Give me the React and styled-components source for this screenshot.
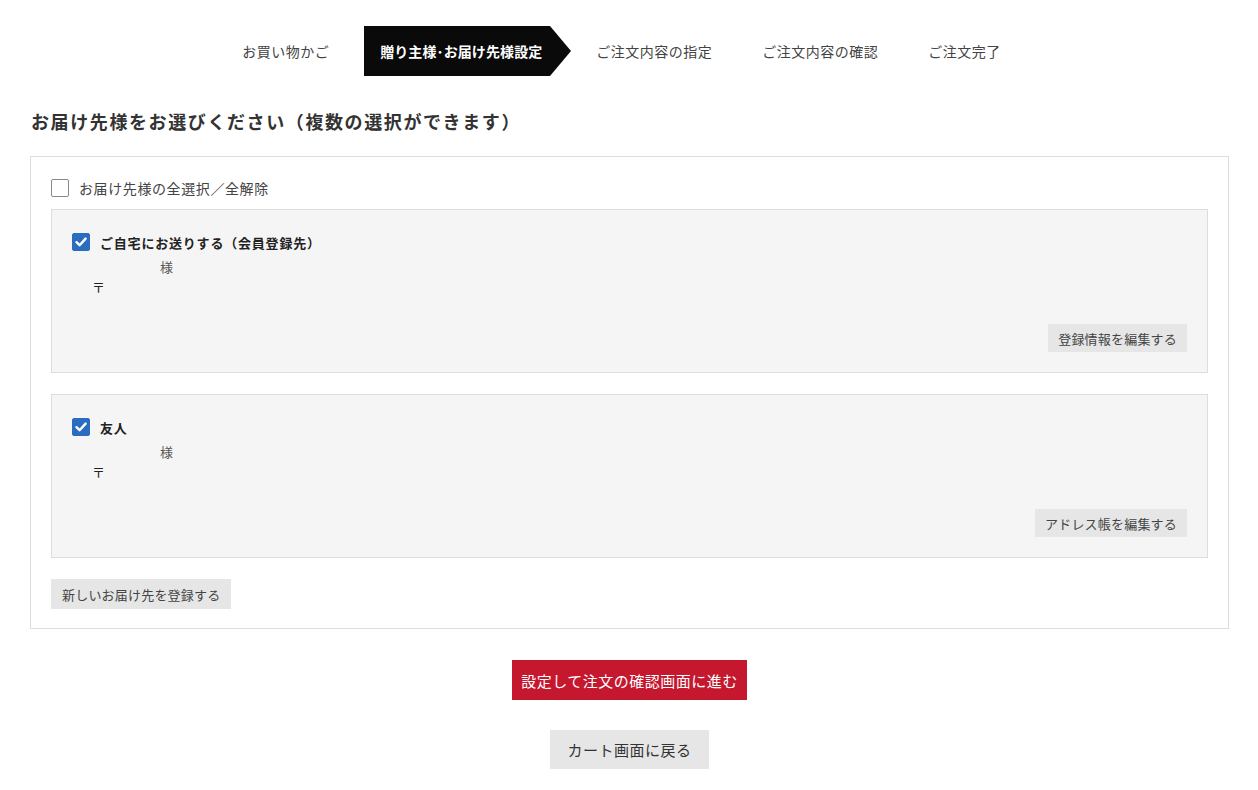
import styled, { createGlobalStyle } from "styled-components";

const GlobalStyle = createGlobalStyle`
  body {
    margin: 0;
    background: #fff;
    color: #333;
    font-family: "Noto Sans CJK JP", "Noto Sans", sans-serif;
  }
`

const Page = styled.div`
  padding: 26px 29px 20px 30px;
`

// ステップ表示
const Steps = styled.ol`
  display: flex;
  justify-content: center;
  align-items: center;
  list-style: none;
  margin: 0;
  padding: 0 16px 0 0;
  height: 50px;
`

const Step = styled.li`
  position: relative;
  display: flex;
  align-items: center;
  height: 50px;
  font-size: 14px;
  letter-spacing: ${(props) => props.active ? '0.1px' : '0.5px'};
  white-space: nowrap;
  color: ${(props) => props.active ? '#fff' : '#444'};
  font-weight: ${(props) => props.active ? 700 : 400};
  background: ${(props) => props.active ? '#0a0a0a' : 'transparent'};
  padding: ${(props) => props.active ? '0 8px 0 16px' : '0 25px'};
  margin: ${(props) => props.active ? '0 21px 0 10px' : '0'};

  &::after {
    content: "";
    display: ${(props) => props.active ? 'block' : 'none'};
    position: absolute;
    left: 100%;
    top: 0;
    border-left: 21px solid #0a0a0a;
    border-top: 25px solid transparent;
    border-bottom: 25px solid transparent;
  }
`

const Heading = styled.h2`
  margin: 32px 0 0 1px;
  font-size: 18px;
  line-height: 26px;
  letter-spacing: 1.6px;
  font-weight: 700;
  color: #333;
`

const Panel = styled.section`
  margin-top: 22px;
  border: 1px solid #ddd;
  padding: 20px 20px 19px;
`

const CheckRow = styled.label`
  display: flex;
  align-items: center;
  gap: 10px;
  height: 22px;
  font-size: ${(props) => props.bold ? '13px' : '14px'};
  font-weight: ${(props) => props.bold ? 700 : 400};
  letter-spacing: ${(props) => props.bold ? '0.8px' : '0.6px'};
  color: ${(props) => props.bold ? '#222' : '#444'};
`

const Box = styled.span`
  width: 18px;
  height: 18px;
  box-sizing: border-box;
  border-radius: 2px;
  flex-shrink: 0;
  display: flex;
  align-items: center;
  justify-content: center;
  border: 1px solid ${(props) => props.checked ? '#2a6cbf' : '#8a8a8a'};
  background: ${(props) => props.checked ? '#2a6cbf' : '#fff'};
`

const Card = styled.div`
  margin-top: ${(props) => props.first ? '10px' : '21px'};
  background: #f5f5f5;
  border: 1px solid #ddd;
  padding: 21px 20px 20px;
  display: flex;
  flex-direction: column;
`

const NameLine = styled.div`
  margin-top: 4px;
  padding-left: 88px;
  font-size: 13px;
  line-height: 20px;
  color: #555;
`

const ZipLine = styled.div`
  padding-left: 20px;
  font-size: 13px;
  line-height: 20px;
  color: #222;
`

const SmallButton = styled.button`
  align-self: ${(props) => props.right ? 'flex-end' : 'flex-start'};
  margin-top: ${(props) => props.right ? '27px' : '21px'};
  height: ${(props) => props.right ? '28px' : '30px'};
  padding: 0 ${(props) => props.right ? '10px' : '11px'};
  border: none;
  background: #e6e6e6;
  color: #444;
  font-family: inherit;
  font-size: 13px;
  letter-spacing: 0.2px;
  cursor: pointer;
`

const Actions = styled.div`
  display: flex;
  flex-direction: column;
  align-items: center;
  gap: 30px;
  margin-top: 31px;
`

const BigButton = styled.button`
  height: ${(props) => props.primary ? '40px' : '39px'};
  padding: ${(props) => props.primary ? '0 9px' : '0 17px'};
  border: none;
  background: ${(props) => props.primary ? '#c5182e' : '#e6e6e6'};
  color: ${(props) => props.primary ? '#fff' : '#333'};
  font-family: inherit;
  font-size: 15px;
  letter-spacing: 0.5px;
  cursor: pointer;
`

const Check = ({ checked }) => (
  <Box checked={checked}>
    {checked && (
      <svg width="14" height="14" viewBox="0 0 14 14">
        <path d="M2.5 7.2 L5.6 10.2 L11.6 3.6" fill="none" stroke="#fff" strokeWidth="2.4" strokeLinecap="round" strokeLinejoin="round" />
      </svg>
    )}
  </Box>
)

const steps = ['お買い物かご', '贈り主様･お届け先様設定', 'ご注文内容の指定', 'ご注文内容の確認', 'ご注文完了']

const addresses = [
  { label: 'ご自宅にお送りする（会員登録先）', button: '登録情報を編集する' },
  { label: '友人', button: 'アドレス帳を編集する' },
]

const App = () => {
  return (
    <>
      <GlobalStyle />
      <Page>
        <Steps>
          {steps.map((s, i) => (
            <Step key={s} active={i === 1}>{s}</Step>
          ))}
        </Steps>

        <Heading>お届け先様をお選びください（複数の選択ができます）</Heading>

        <Panel>
          <CheckRow>
            <Check />
            お届け先様の全選択／全解除
          </CheckRow>

          {addresses.map((a, i) => (
            <Card key={a.label} first={i === 0}>
              <CheckRow bold>
                <Check checked />
                {a.label}
              </CheckRow>
              <NameLine>様</NameLine>
              <ZipLine>〒</ZipLine>
              <SmallButton right>{a.button}</SmallButton>
            </Card>
          ))}

          <SmallButton>新しいお届け先を登録する</SmallButton>
        </Panel>

        <Actions>
          <BigButton primary>設定して注文の確認画面に進む</BigButton>
          <BigButton>カート画面に戻る</BigButton>
        </Actions>
      </Page>
    </>
  )
}

export default App;
